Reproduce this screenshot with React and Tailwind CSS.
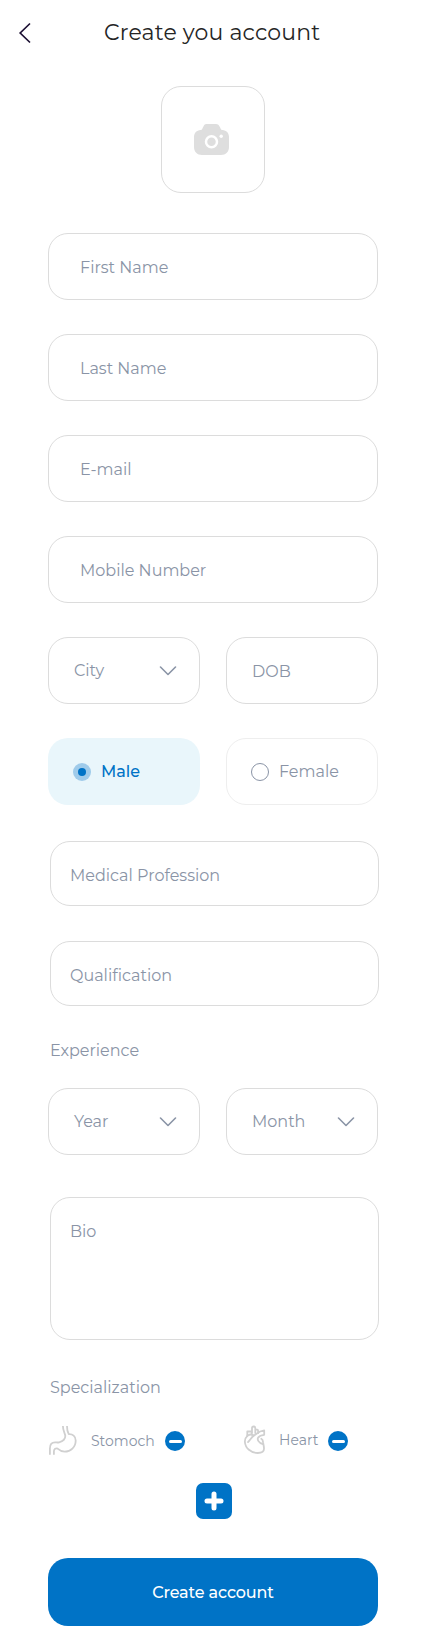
const box = "flex rounded-[20px] border border-[#dcdcdc]";

function ChevronDown() {
  return (
    <svg className="h-[10px] w-[18px]" viewBox="0 0 18 10" fill="none" stroke="#8a94a6" strokeWidth="1.6" strokeLinecap="round" strokeLinejoin="round">
      <path d="M1.5 1 9 8.5 16.5 1" />
    </svg>
  );
}

function Field({ label }) {
  return <div className={`${box} h-[67px] items-center pl-[31px] pt-0.5`}>{label}</div>;
}

function Select({ label }) {
  return (
    <div className={`${box} h-[67px] w-[152px] items-center justify-between pl-[25px] pr-[22px]`}>
      <span>{label}</span>
      <ChevronDown />
    </div>
  );
}

function WideField({ label }) {
  return <div className={`${box} ml-0.5 h-[65px] w-[329px] items-center pl-[19px] pt-[5px]`}>{label}</div>;
}

function Minus() {
  return (
    <span className="flex size-5 items-center justify-center rounded-full bg-[#0073c6]">
      <span className="h-[3px] w-[13px] rounded-full bg-white" />
    </span>
  );
}

function Stomach() {
  return (
    <svg className="h-[31px] w-[30px]" viewBox="0 0 30 31" fill="none" stroke="#d0d0d0" strokeWidth="1.8" strokeLinejoin="round">
      <path d="M1.9 29.8V23.5C1.9 19.5 3.6 17.3 7 17.3c1.5 0 2.2.5 4.100 0 3.500-.9 6.200-3.200 6.200-6.200C17.300 8.500 14.900 6.500 14.900 1.100" />
      <path d="M19 1.100c0 3.500.4 6 1.700 8 3.900-.3 7 2.200 7 6.300 0 6.700-5.200 11.300-11 11.300-3 0-5.100-1.300-7.100-3.100-1.700-.9-3.700.4-3.700 2.700v3.500" />
    </svg>
  );
}

function Heart() {
  return (
    <svg className="h-[30px] w-[24px]" viewBox="0 0 24 30" fill="none" stroke="#d0d0d0" strokeWidth="1.8" strokeLinecap="round" strokeLinejoin="round">
      <path d="M4.200 11.100C2.600 12.500 1.700 14.500 1.900 17c.4 6.200 6.100 10.900 12.900 11 3.900 0 6.200-1.300 6.200-4.200 0-2.700-.7-4.300-.9-6.400-.1-1.500-.3-2.900-1.800-3.600" />
      <path d="M4.300 10.800V6.500h4.400v3.100M9 8.100V3.300c0-2.400 3.300-2.400 3.300 0V8M12.500 4.500c2 0 2.600.2 2.600 1.500v2.200" />
      <path d="M5 17.100C7.600 14.500 8.200 12.500 11 10.600 14.100 8.400 16.300 5.800 21.200 5.400v4.400c-3.400.4-5 1.300-6.100 2.800-1 1.700.3 5.500 4.800 6.400" />
      <path d="M4.500 10.700c2.500-1.600 4.300-1.600 6.200-.2" />
    </svg>
  );
}

export default function App() {
  return (
    <main className="min-h-[1644px] w-[428px] bg-white font-['Montserrat','Inter',sans-serif] text-base leading-6 text-[#8a94a6] [font-variant-ligatures:none]">
      <header className="flex h-[86px] items-start pl-[18px] pt-[18px]">
        <svg className="mt-1 h-[22px] w-[14px]" viewBox="0 0 14 22" fill="none" stroke="#1c1033" strokeWidth="1.7">
          <path d="M12 1.500 2.200 11 12 20.500" />
        </svg>
        <h1 className="ml-[72px] whitespace-nowrap text-[22px] leading-[30px] tracking-[0.17px] text-[#252525]">Create you account</h1>
      </header>

      <div className={`${box} ml-[161px] h-[107px] w-[104px] items-center justify-center`}>
        <svg className="mr-[3px] h-[31px] w-[35px]" viewBox="0 0 35 31">
          <path fill="#dedede" d="M12.500 0h9.500c2 0 3 1.200 3.700 2.700l1 2.100c.4.900.9 1.200 1.800 1.200 3.800.3 6.500 3 6.500 6.800V23c0 4.800-3.200 8-8 8H8c-4.800 0-8-3.200-8-8V12.800C0 9 2.700 6.300 6.500 6c.9 0 1.400-.3 1.800-1.200l1-2.100C10 1.200 10.600 0 12.500 0Z" />
          <circle cx="17.500" cy="17.700" r="5.500" fill="none" stroke="#fff" strokeWidth="2.500" />
          <circle cx="27.200" cy="12.200" r="1.700" fill="#fff" />
        </svg>
      </div>

      <form className="ml-12 mt-10 w-[330px]">
        <div className="flex flex-col gap-[34px]">
          <Field label="First Name" />
          <Field label="Last Name" />
          <Field label="E-mail" />
          <Field label="Mobile Number" />
          <div className="flex justify-between">
            <Select label="City" />
            <div className={`${box} h-[67px] w-[152px] items-center pl-[25px] pt-0.5`}>DOB</div>
          </div>
          <div className="flex justify-between">
            <div className="flex h-[67px] w-[152px] items-center rounded-[20px] bg-[#e9f6fb] pl-[25px] font-medium text-[#0073c6]">
              <span className="mr-[10px] flex size-[18px] items-center justify-center rounded-full bg-[#9fcbea]">
                <span className="size-2 rounded-full bg-[#0073c6]" />
              </span>
              Male
            </div>
            <div className="flex h-[67px] w-[152px] items-center rounded-[20px] border border-[#eeeeee] pl-6">
              <span className="mr-[10px] size-[18px] rounded-full border border-[#8a94a6]" />
              Female
            </div>
          </div>
        </div>

        <div className="mt-9 flex flex-col gap-[35px]">
          <WideField label="Medical Profession" />
          <WideField label="Qualification" />
        </div>

        <h2 className="ml-0.5 mt-[33px]">Experience</h2>
        <div className="mt-[25px] flex justify-between">
          <Select label="Year" />
          <Select label="Month" />
        </div>

        <div className={`${box} ml-0.5 mt-[42px] h-[143px] w-[329px] pl-[19px] pt-[22px]`}>Bio</div>

        <h2 className="ml-0.5 mt-9">Specialization</h2>
        <div className="mt-[25px] flex h-[31px] text-sm leading-5">
          <div className="flex">
            <Stomach />
            <span className="ml-[13px] mt-[6px] w-[74px]">Stomoch</span>
            <span className="mt-[6px]"><Minus /></span>
          </div>
          <div className="ml-[58px] flex">
            <Heart />
            <span className="ml-3 mt-[5px] w-[49px]">Heart</span>
            <span className="mt-[6px]"><Minus /></span>
          </div>
        </div>

        <button type="button" aria-label="Add specialization" className="ml-[148px] mt-[27px] flex size-9 items-center justify-center rounded-[7px] bg-[#0073c6]">
          <svg className="size-5" viewBox="0 0 20 20" stroke="#fff" strokeWidth="5" strokeLinecap="round">
            <path d="M10 3v14M3 10h14" />
          </svg>
        </button>

        <button type="button" className="mt-[39px] flex h-[68px] w-full items-center justify-center rounded-[20px] bg-[#0073c6] pt-0.5 font-medium tracking-[-0.12px] text-white">
          Create account
        </button>
      </form>
    </main>
  );
}
